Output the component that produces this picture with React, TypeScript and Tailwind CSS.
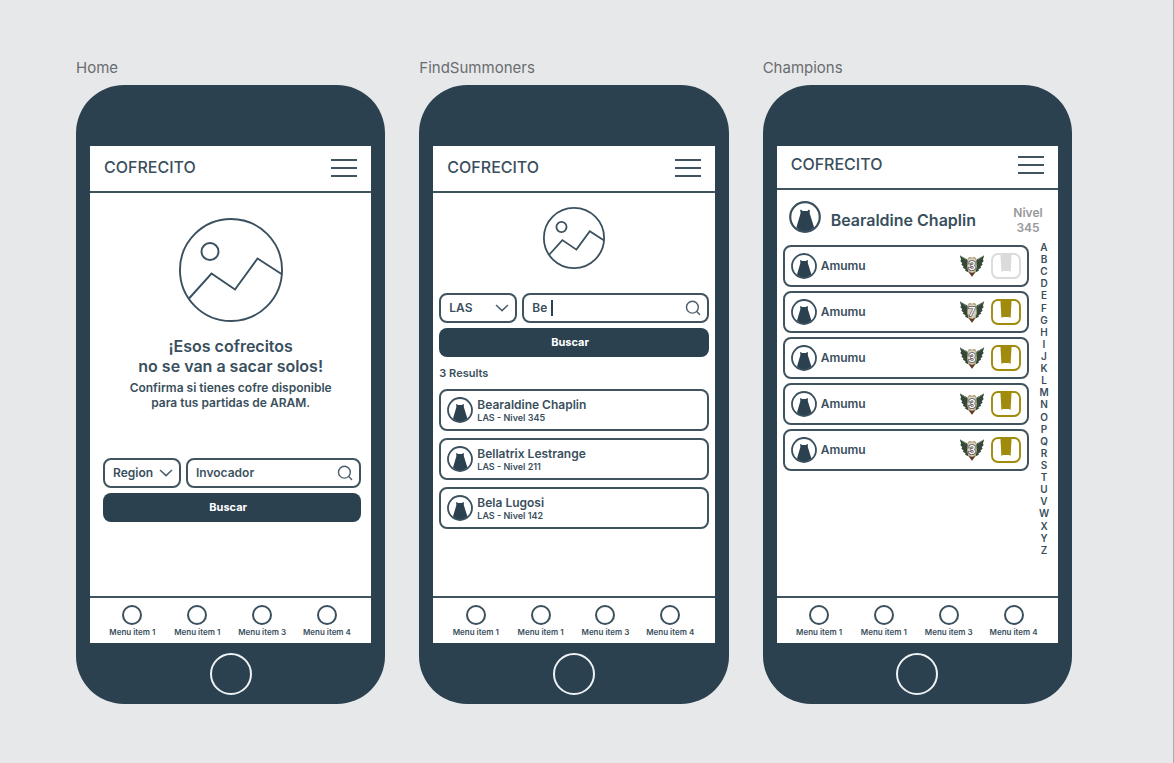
import type { ReactNode } from "react";

const ALPHABET = "ABCDEFGHIJKLMNOPQRSTUVWXYZ".split("");

const MENU_ITEMS = ["Menu item 1", "Menu item 1", "Menu item 3", "Menu item 4"];

const SUMMONERS = [
  { name: "Bearaldine Chaplin", detail: "LAS - Nivel 345" },
  { name: "Bellatrix Lestrange", detail: "LAS - Nivel 211" },
  { name: "Bela Lugosi", detail: "LAS - Nivel 142" },
];

const CHAMPIONS = [
  { name: "Amumu", mastery: 3, chest: false },
  { name: "Amumu", mastery: 7, chest: true },
  { name: "Amumu", mastery: 3, chest: true },
  { name: "Amumu", mastery: 3, chest: true },
  { name: "Amumu", mastery: 3, chest: true },
];

function PictureIcon({ className, stroke }: { className: string; stroke: number }) {
  return (
    <svg viewBox="0 0 104 104" className={className} fill="none" stroke="#3a505e" strokeWidth={stroke} aria-hidden="true">
      <circle cx="52" cy="52" r={52 - stroke / 2} />
      <circle cx="31" cy="33.5" r="8.5" />
      <path d="M10 80.5 L32.5 55.5 L56 71.5 L78.5 40.5 L102.5 56" />
    </svg>
  );
}

function AvatarIcon({ className }: { className: string }) {
  return (
    <svg viewBox="0 0 26 26" className={className} aria-hidden="true">
      <circle cx="13" cy="13" r="12" fill="white" />
      <path
        d="M9.8 7 L11 8.1 H15 L16.2 7 L16.9 7.6 L16.8 10 L20.4 21.6 Q17 25 13 25 Q9 25 6 21.6 L9.4 10 L9.1 7.6 Z"
        fill="#2b4150"
      />
      <circle cx="13" cy="13" r="12" fill="none" stroke="#3a505e" strokeWidth="1.8" />
    </svg>
  );
}

function SearchIcon() {
  return (
    <svg viewBox="0 0 16 16" className="size-4 shrink-0" fill="none" stroke="#4a5e6b" strokeWidth="1.4" strokeLinecap="round" aria-hidden="true">
      <circle cx="7.4" cy="7.2" r="5.9" />
      <path d="M11.7 11.5 L14.6 14.4" />
    </svg>
  );
}

function MasteryEmblem({ level }: { level: number }) {
  return (
    <svg viewBox="0 0 26 24" className="h-6 w-[26px] shrink-0" role="img" aria-label={`Maestría ${level}`}>
      <path d="M0.8 1.5 L8 5.2 L10 8 L9.5 18.5 L6 16.4 L6.6 15.2 L3.8 13.8 L4.6 12.4 L2.4 10.7 L3.2 9.2 L1.2 6.8 L2.2 6 Z" fill="#34483a" />
      <path d="M25.2 1.5 L18 5.2 L16 8 L16.5 18.5 L20 16.4 L19.4 15.2 L22.2 13.8 L21.4 12.4 L23.6 10.7 L22.8 9.2 L24.8 6.8 L23.8 6 Z" fill="#34483a" />
      <path d="M1 1.5 L7.6 6 M25 1.5 L18.4 6" stroke="#8e9f86" strokeWidth="0.7" />
      <path d="M8.8 4 L11 2.8 L13 3.8 L15 2.8 L17.2 4 L18 13 L16.3 18.5 L13 22.8 L9.7 18.5 L8 13 Z" fill="#b7a67d" />
      <path d="M9.6 18 L13 19 L16.4 18 L13 22.8 Z" fill="#5e3a2c" />
      <path d="M9.6 5 L13 4.6 L16.4 5 L17 13 L15.4 17 L13 18.3 L10.6 17 L9 13 Z" fill="#d9d4c8" />
      <text
        x="13"
        y="16"
        textAnchor="middle"
        fontFamily="Inter, sans-serif"
        fontSize="12"
        fontWeight="500"
        fill="#ffffff"
        stroke="#55555a"
        strokeWidth="1.5"
        paintOrder="stroke"
      >
        {level}
      </text>
    </svg>
  );
}

function ChestIcon({ available }: { available: boolean }) {
  const color = available ? "#a18b0d" : "#dbdbdc";
  return (
    <svg viewBox="0 0 30 26" className="h-[26px] w-[30px] shrink-0" role="img" aria-label={available ? "Cofre disponible" : "Sin cofre"}>
      <rect x="1" y="1" width="28" height="24" rx="6" fill="white" stroke={color} strokeWidth="1.9" />
      <path d="M9.4 1 H20.6 L19.6 19 L18 18 H12 L10.4 19 Z" fill={color} />
    </svg>
  );
}

function MenuButton() {
  return (
    <button type="button" aria-label="Menú" className="flex w-[26px] flex-col gap-[6px]">
      <span className="h-0.5 w-full bg-[#40545f]" />
      <span className="h-0.5 w-full bg-[#40545f]" />
      <span className="h-0.5 w-full bg-[#40545f]" />
    </button>
  );
}

function BottomMenu() {
  return (
    <nav className="grid h-[47px] shrink-0 grid-cols-4 border-t-2 border-[#40545f] pr-3 pl-2.5 pt-[7px]">
      {MENU_ITEMS.map((label, index) => (
        <a key={index} href="#menu" className="flex flex-col items-center gap-px whitespace-nowrap text-[8px] leading-[12px] font-semibold">
          <span className="size-5 rounded-full border-2 border-[#3a505e]" />
          {label}
        </a>
      ))}
    </nav>
  );
}

function Phone({ title, compact = false, children }: { title: string; compact?: boolean; children: ReactNode }) {
  return (
    <section className="min-w-0">
      <h2 className="h-[26px] text-[15px] leading-[18px] text-[#6a6c6f]">{title}</h2>
      <div className="flex min-h-[619px] flex-col rounded-[48px] bg-[#2b4150] px-3.5 pt-[61px]">
        <div className="flex min-h-[497px] flex-1 flex-col bg-white">
          <header
            className={`flex shrink-0 items-center justify-between border-b-2 border-[#40545f] px-3.5 ${compact ? "h-11 pb-1" : "h-[47px] pb-0.5"}`}
          >
            <h1 className="pb-0.5 text-base leading-6 font-medium">COFRECITO</h1>
            <MenuButton />
          </header>
          <div className="flex flex-1 flex-col">{children}</div>
          <BottomMenu />
        </div>
        <div className="flex h-[61px] items-center justify-center">
          <button type="button" aria-label="Inicio" className="size-[42px] rounded-full border-2 border-[#eef2f4]" />
        </div>
      </div>
    </section>
  );
}

function SearchForm({ region, typing, placeholder, id }: { region: string; typing?: string; placeholder?: string; id: string }) {
  return (
    <form className="flex flex-col gap-[5px]" onSubmit={(event) => event.preventDefault()}>
      <div className="flex gap-[5px]">
        <div className="grid h-[30px] w-[78px] shrink-0 items-center rounded-lg border-2 border-[#40545f]">
          <select
            aria-label="Region"
            defaultValue={region}
            className="col-start-1 row-start-1 h-full w-full appearance-none bg-transparent pl-2 text-xs font-semibold outline-none"
          >
            <option>{region}</option>
          </select>
          <svg
            viewBox="0 0 14 8"
            className="pointer-events-none col-start-1 row-start-1 mr-1.5 h-2 w-3.5 justify-self-end"
            fill="none"
            stroke="#4a5e6b"
            strokeWidth="1.5"
            aria-hidden="true"
          >
            <path d="M1 1 L7 6.6 L13 1" />
          </svg>
        </div>
        <label htmlFor={id} className="flex h-[30px] min-w-0 flex-1 items-center rounded-lg border-2 border-[#40545f] pr-1.5 pl-2">
          {typing ? (
            <>
              <input
                id={id}
                aria-label="Invocador"
                defaultValue={typing}
                className="field-sizing-content text-xs font-semibold outline-none"
              />
              <span className="ml-1 h-4 w-0.5 bg-[#2b4150]" />
              <span className="flex-1" />
            </>
          ) : (
            <input
              id={id}
              aria-label="Invocador"
              placeholder={placeholder}
              className="min-w-0 flex-1 text-xs font-semibold outline-none placeholder:text-[#40545f]"
            />
          )}
          <SearchIcon />
        </label>
      </div>
      <button type="submit" className="h-[29px] rounded-lg bg-[#2b4150] pr-2 text-[11px] font-bold text-white">
        Buscar
      </button>
    </form>
  );
}

function HomeScreen() {
  return (
    <Phone title="Home">
      <div className="flex flex-col items-center pt-[25px] text-center">
        <PictureIcon className="size-[104px]" stroke={1.9} />
        <p className="mt-3.5 text-base leading-5 font-semibold">
          ¡Esos cofrecitos
          <br />
          no se van a sacar solos!
        </p>
        <p className="mt-1 text-xs leading-[15px] font-semibold">
          Confirma si tienes cofre disponible
          <br />
          para tus partidas de ARAM.
        </p>
      </div>
      <div className="mt-12 pr-2.5 pl-[13px]">
        <SearchForm id="home-summoner" region="Region" placeholder="Invocador" />
      </div>
    </Phone>
  );
}

function FindSummonersScreen() {
  return (
    <Phone title="FindSummoners">
      <div className="flex flex-col px-1.5 pt-3.5">
        <PictureIcon className="size-[62px] self-center" stroke={3} />
        <div className="mt-6">
          <SearchForm id="find-summoner" region="LAS" typing="Be" />
        </div>
        <p className="mt-2 text-[11px] leading-4 font-semibold">3 Results</p>
        <ul className="mt-2 flex flex-col gap-[7px]">
          {SUMMONERS.map((summoner) => (
            <li key={summoner.name} className="flex h-[42px] items-center gap-1 rounded-lg border-2 border-[#40545f] px-1.5">
              <AvatarIcon className="size-[26px] shrink-0" />
              <div>
                <p className="text-xs leading-[15px] font-semibold">{summoner.name}</p>
                <p className="text-[9px] leading-3 font-semibold">{summoner.detail}</p>
              </div>
            </li>
          ))}
        </ul>
      </div>
    </Phone>
  );
}

function ChampionsScreen() {
  return (
    <Phone title="Champions" compact>
      <div className="flex items-start px-3 pt-[11px]">
        <AvatarIcon className="size-8 shrink-0" />
        <p className="mt-[7px] ml-2.5 flex-1 text-base leading-6 font-semibold whitespace-nowrap">Bearaldine Chaplin</p>
        <p className="mt-1 w-9 text-center text-xs leading-[15px] font-semibold text-[#97999b]">
          Nivel
          <br />
          345
        </p>
      </div>
      <div className="mt-1.5 flex items-start pr-[7px] pl-1.5">
        <ul className="mt-1 flex min-w-0 flex-1 flex-col gap-1">
          {CHAMPIONS.map((champion, index) => (
            <li key={index} className="flex h-[42px] items-center rounded-lg border-2 border-[#40545f] px-1.5">
              <AvatarIcon className="size-[26px] shrink-0" />
              <span className="ml-1 flex-1 text-xs font-semibold">{champion.name}</span>
              <MasteryEmblem level={champion.mastery} />
              <span className="ml-1.5 flex">
                <ChestIcon available={champion.chest} />
              </span>
            </li>
          ))}
        </ul>
        <nav aria-label="Índice" className="ml-2 flex h-[315px] w-3.5 flex-col items-center justify-between">
          {ALPHABET.map((letter) => (
            <a key={letter} href={`#${letter}`} className="text-[10px] leading-3 font-semibold">
              {letter}
            </a>
          ))}
        </nav>
      </div>
    </Phone>
  );
}

export default function App() {
  return (
    <main className="min-h-screen border-r border-[#a9abad] bg-[#e7e8ea] pt-[59px] pr-[101px] pb-[59px] pl-[76px] font-['Inter','Liberation_Sans',sans-serif] text-[#3a4f5d]">
      <div className="grid grid-cols-3 gap-[34px]">
        <HomeScreen />
        <FindSummonersScreen />
        <ChampionsScreen />
      </div>
    </main>
  );
}
